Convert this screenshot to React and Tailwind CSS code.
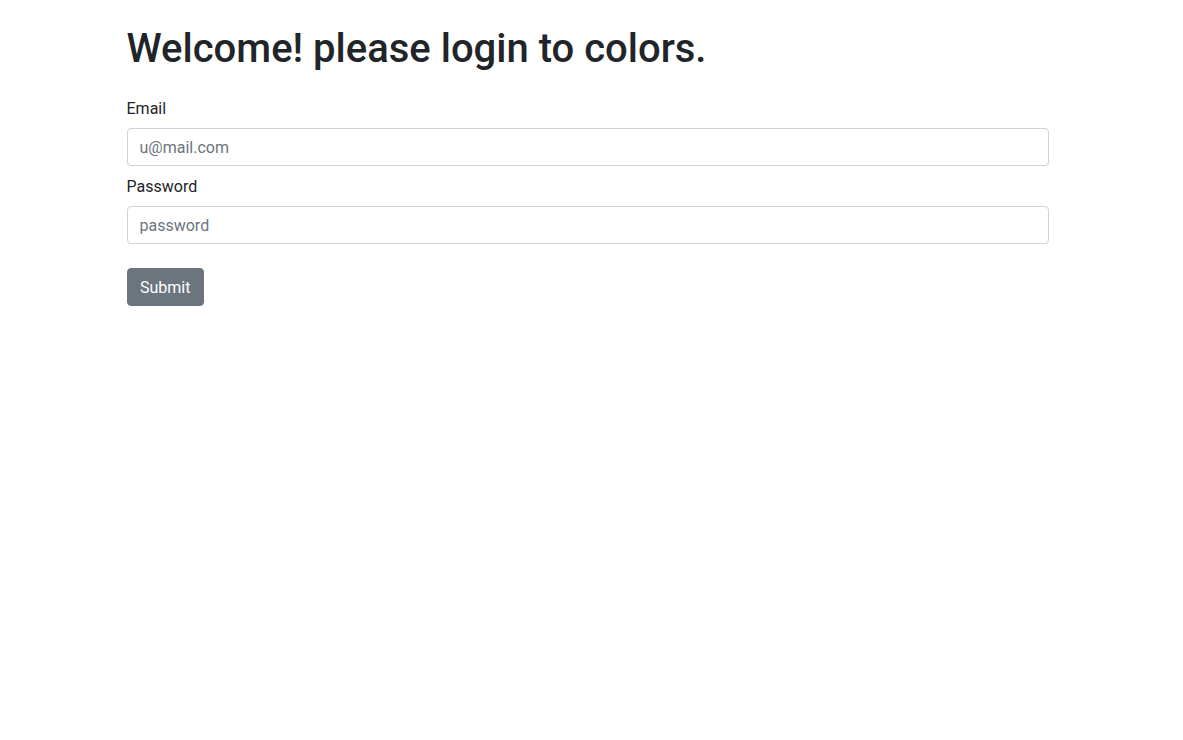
import React, {useState} from "react";

export default function App() {
  const [email, setEmail] = useState("");
  const [password, setPassword] = useState("");

  return (
    <div className="min-h-screen bg-white text-[#212529] font-['Roboto',sans-serif]">
      <div className="mx-auto w-[960px] px-[15px] pt-[25px]">
        <h1 className="text-[40px] leading-[48px] font-medium mb-[23px]">
          Welcome! please login to colors.
        </h1>
        <form className="w-[922px]" onSubmit={(e) => e.preventDefault()}>
          <div className="mb-2">
            <label className="block text-base leading-6 pt-px mb-[7px]">Email</label>
            <input
              type="email"
              value={email}
              onChange={(e) => setEmail(e.target.value)}
              placeholder="u@mail.com"
              className="block w-full h-[38px] px-3 text-base border border-[#ced4da] rounded-[4px] placeholder:text-[#6c757d] outline-none"
            />
          </div>
          <div className="mb-6">
            <label className="block text-base leading-6 pt-px mb-[7px]">Password</label>
            <input
              type="password"
              value={password}
              onChange={(e) => setPassword(e.target.value)}
              placeholder="password"
              className="block w-full h-[38px] px-3 text-base border border-[#ced4da] rounded-[4px] placeholder:text-[#6c757d] outline-none"
            />
          </div>
          <button
            type="submit"
            className="h-[38px] px-[12.5px] pt-px text-base text-white bg-[#6c757d] border border-[#6c757d] rounded-[4px]"
          >
            Submit
          </button>
        </form>
      </div>
    </div>
  );
}
